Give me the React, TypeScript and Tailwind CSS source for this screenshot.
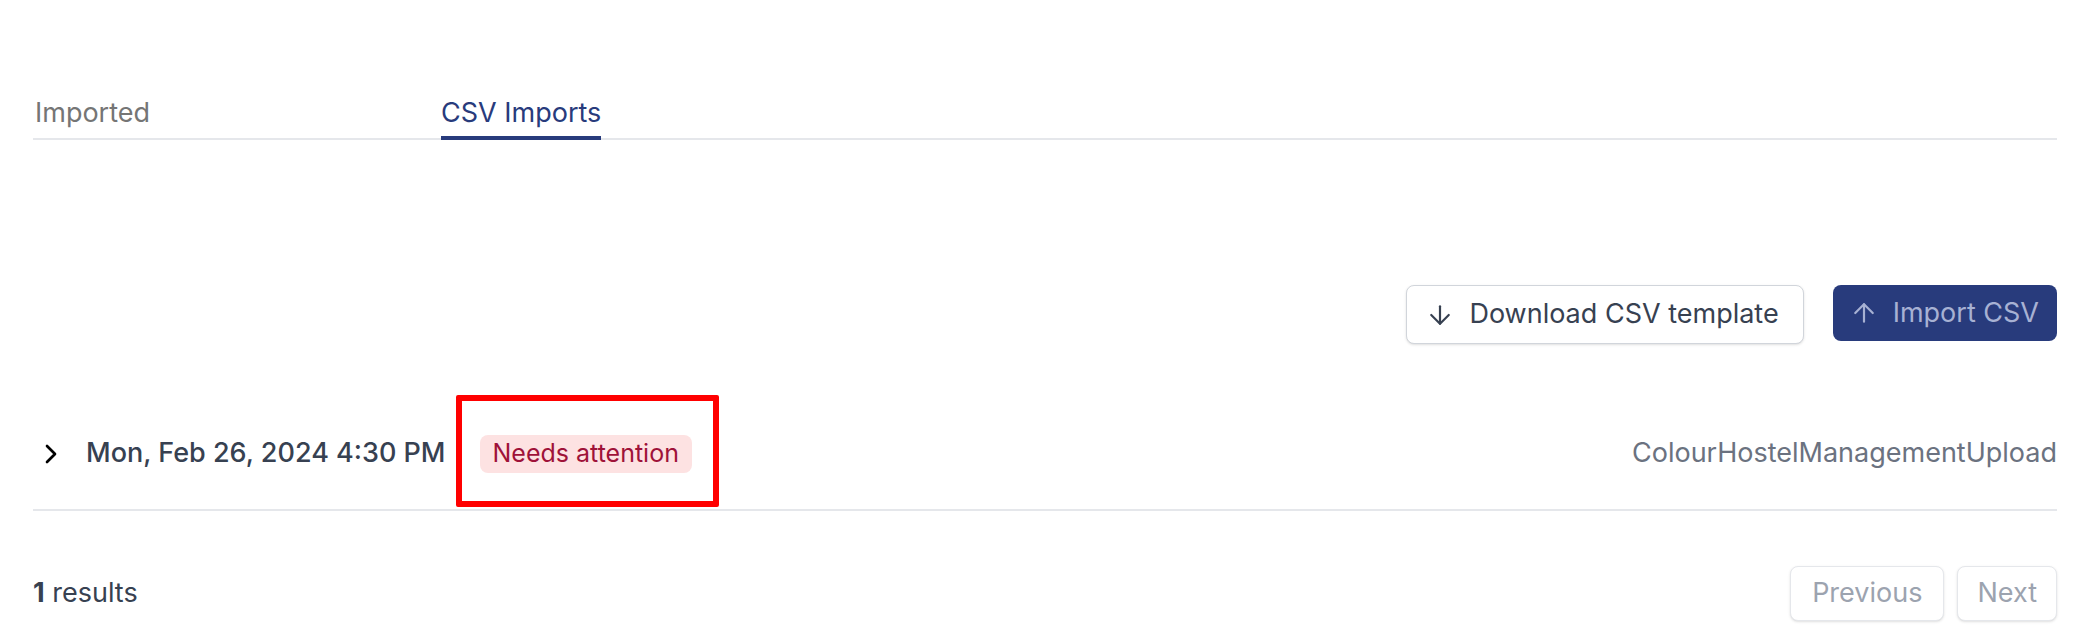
import { ArrowDown, ArrowUp, ChevronRight } from "lucide-react";

const tabs = [
  { label: "Imported", active: false },
  { label: "CSV Imports", active: true },
];

const App = () => {
  return (
    <div className="min-h-[633px] w-full bg-white px-[33px] font-['Inter',_'Liberation_Sans',_sans-serif] text-[27px]">
      <div className="pt-[96px]">
        <nav className="flex border-b-2 border-[#e5e7eb]">
          {tabs.map((tab) => (
            <div
              key={tab.label}
              className={`-mb-[2px] border-b-[4px] pb-[6px] leading-[34px] ${
                tab.active ? "border-[#283b7c] text-[#283b7c]" : "ml-[2px] w-[406px] border-transparent text-[#757575]"
              }`}
            >
              {tab.label}
            </div>
          ))}
        </nav>
      </div>

      <div className="mt-[145px] flex justify-end gap-[29px]">
        <button className="flex h-[59px] items-center gap-[14px] rounded-[8px] border border-[#d1d5db] bg-white pl-[18px] pr-[24px] text-[#374151] shadow-sm">
          <ArrowDown size={30} strokeWidth={1.75} />
          Download CSV template
        </button>
        <button className="flex h-[56px] items-center gap-[14px] rounded-[8px] bg-[#283b7c] pl-[16px] pr-[18px] text-[#a7b1d3]">
          <ArrowUp size={30} strokeWidth={1.75} />
          Import CSV
        </button>
      </div>

      <div className="mt-[54px] flex h-[113px] items-center border-b-2 border-[#e5e7eb]">
        <ChevronRight size={32} strokeWidth={2} className="ml-[2px] text-black" />
        <span className="ml-[19px] font-medium text-[#374151]">Mon, Feb 26, 2024 4:30 PM</span>
        <div className="relative ml-[34px] flex">
          <span className="inline-flex h-[38px] items-center rounded-[8px] bg-[#fde2e2] px-[13px] text-[25px] text-[#9f1239]">
            Needs attention
          </span>
          <div className="absolute -bottom-[34px] -left-[24px] -right-[27px] -top-[40px] rounded-[2px] border-[6px] border-[#ff0000]" />
        </div>
        <span className="ml-auto text-[#6b7280]">ColourHostelManagementUpload</span>
      </div>

      <div className="mt-[55px] flex items-center justify-between">
        <p className="text-[#374151]">
          <span className="font-bold">1</span> results
        </p>
        <div className="flex gap-[13px]">
          <button className="h-[55px] rounded-[8px] border border-[#e5e7eb] bg-white px-[21px] text-[#9ca3af] shadow-sm">
            Previous
          </button>
          <button className="h-[55px] rounded-[8px] border border-[#e5e7eb] bg-white px-[19px] text-[#9ca3af] shadow-sm">
            Next
          </button>
        </div>
      </div>
    </div>
  );
};

export default App;
